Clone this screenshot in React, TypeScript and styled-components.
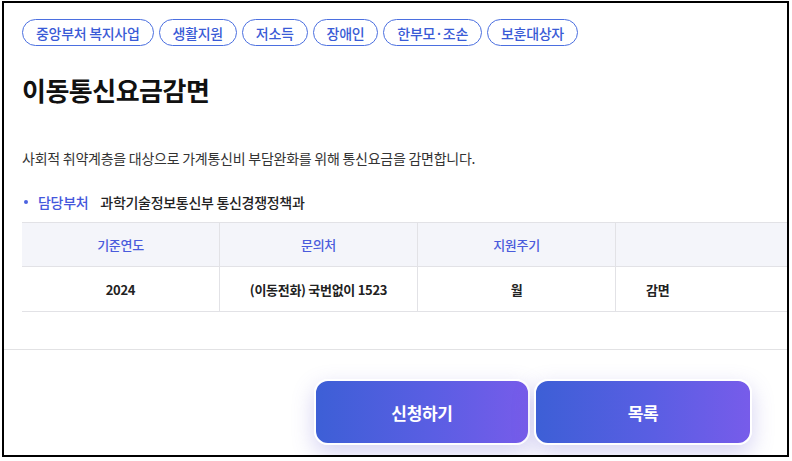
import React from "react";
import styled, { createGlobalStyle } from "styled-components";

const Global = createGlobalStyle`
  html, body { margin: 0; padding: 0; background: #fff; }
  body { font-family: "Noto Sans CJK KR", "Noto Sans", sans-serif; }
  * { box-sizing: border-box; }
`;

const Frame = styled.div`
  margin: 1px 0 0 2px;
  width: 787px;
  height: 456px;
  border: 2px solid #000;
  overflow: hidden;
  display: flex;
  flex-direction: column;
  background: #fff;
`;

const Content = styled.div`
  padding: 16px 0 0 18px;
  display: flex;
  flex-direction: column;
`;

const Tags = styled.div`
  display: flex;
  gap: 5px;
`;

const Tag = styled.span`
  height: 27px;
  padding: 0 13px;
  border: 1px solid #4b6fe0;
  border-radius: 14px;
  color: #3a5bd6;
  font-size: 14px;
  font-weight: 500;
  letter-spacing: -0.3px;
  display: inline-flex;
  align-items: center;
  white-space: nowrap;
`;

const Title = styled.h1`
  margin: 26px 0 0;
  font-size: 26px;
  line-height: 36px;
  font-weight: 700;
  letter-spacing: -0.5px;
  color: #111;
`;

const Desc = styled.p`
  margin: 40px 0 0;
  font-size: 14px;
  line-height: 20px;
  color: #333;
  letter-spacing: -0.25px;
`;

const Dept = styled.div`
  margin-top: 24px;
  display: flex;
  align-items: center;
  height: 20px;
  font-size: 14px;
  letter-spacing: -0.3px;
`;

const Dot = styled.span`
  width: 4px;
  height: 4px;
  border-radius: 50%;
  background: #4b62e0;
  margin: 0 10px 0 2px;
`;

const DeptLabel = styled.span`
  color: #4457dc;
  font-weight: 500;
  margin-right: 12px;
`;

const DeptValue = styled.span`
  color: #222;
  font-weight: 500;
`;

const Table = styled.div`
  margin-top: 10px;
  display: grid;
  grid-template-columns: repeat(4, 198px);
  width: 792px;
  border-top: 1px solid #e2e2e6;
`;

const Cell = styled.div<{ $head?: boolean; $left?: boolean; $last?: boolean }>`
  height: ${(p) => (p.$head ? "44px" : "45px")};
  display: flex;
  align-items: center;
  justify-content: ${(p) => (p.$left ? "flex-start" : "center")};
  padding-left: ${(p) => (p.$left ? "30px" : "0")};
  background: ${(p) => (p.$head ? "#f4f5fa" : "#fff")};
  border-bottom: 1px solid #e2e2e6;
  border-right: ${(p) => (p.$last ? "none" : "1px solid #e2e2e6")};
  font-size: 13px;
  letter-spacing: -0.3px;
  font-weight: ${(p) => (p.$head ? 500 : 600)};
  color: ${(p) => (p.$head ? "#4a5bdc" : "#222")};
`;

const Divider = styled.div`
  margin-top: 37px;
  height: 1px;
  background: #e2e2e4;
`;

const Footer = styled.div`
  display: flex;
  justify-content: flex-end;
  gap: 4px;
  padding: 29px 35px 0 0;
`;

const Button = styled.button<{ $w: number }>`
  width: ${(p) => p.$w}px;
  height: 66px;
  border: 2px solid #fff;
  border-radius: 14px;
  background: linear-gradient(90deg, #3d5fd6 0%, #5a5ee3 55%, #775cea 100%);
  box-shadow: 0 8px 22px rgba(100, 90, 210, 0.28);
  color: #fff;
  font-family: inherit;
  font-size: 17px;
  font-weight: 700;
  letter-spacing: -0.3px;
  cursor: pointer;
`;

const tags = ["중앙부처 복지사업", "생활지원", "저소득", "장애인", "한부모·조손", "보훈대상자"];

export default function App() {
  return (
    <>
      <Global />
      <Frame>
        <Content>
          <Tags>
            {tags.map((t) => (
              <Tag key={t}>{t}</Tag>
            ))}
          </Tags>
          <Title>이동통신요금감면</Title>
          <Desc>사회적 취약계층을 대상으로 가계통신비 부담완화를 위해 통신요금을 감면합니다.</Desc>
          <Dept>
            <Dot />
            <DeptLabel>담당부처</DeptLabel>
            <DeptValue>과학기술정보통신부 통신경쟁정책과</DeptValue>
          </Dept>
          <Table>
            <Cell $head>기준연도</Cell>
            <Cell $head>문의처</Cell>
            <Cell $head>지원주기</Cell>
            <Cell $head $last></Cell>
            <Cell>2024</Cell>
            <Cell>(이동전화) 국번없이 1523</Cell>
            <Cell>월</Cell>
            <Cell $left $last>감면</Cell>
          </Table>
        </Content>
        <Divider />
        <Footer>
          <Button $w={216}>신청하기</Button>
          <Button $w={218}>목록</Button>
        </Footer>
      </Frame>
    </>
  );
}
